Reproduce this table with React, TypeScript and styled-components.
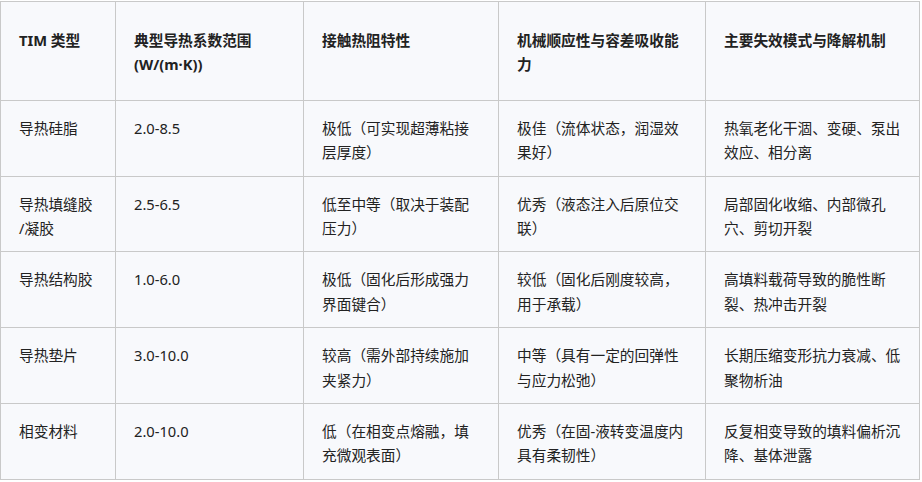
import React from "react";
import styled, { createGlobalStyle } from "styled-components";

const Global = createGlobalStyle`
  html, body { margin: 0; padding: 0; background: #ffffff; }
  body { font-family: "Noto Sans", "Noto Sans CJK SC", sans-serif; }
`;

const Table = styled.table`
  margin-top: 1px;
  width: 919px;
  table-layout: fixed;
  border-collapse: collapse;
  background: #f8f9fc;
  color: #222;
  font-family: "Noto Sans", "Noto Sans CJK SC", sans-serif;
  font-size: 14.7px;
  line-height: 24.4px;
`;

const Head = styled.th`
  text-align: left;
  vertical-align: top;
  font-weight: 700;
  padding: 26px 18px 23px;
  border: 1px solid #c9c9c9;
`;

const Cell = styled.td`
  vertical-align: top;
  padding: 15px 18px 11px;
  border: 1px solid #c9c9c9;
`;

const widths = [115, 188, 195, 207, 214];

const headers = [
  "TIM 类型",
  "典型导热系数范围 (W/(m·K))",
  "接触热阻特性",
  "机械顺应性与容差吸收能力",
  "主要失效模式与降解机制",
];

const rows: string[][] = [
  ["导热硅脂", "2.0-8.5", "极低（可实现超薄粘接层厚度）", "极佳（流体状态，润湿效果好）", "热氧老化干涸、变硬、泵出效应、相分离"],
  ["导热填缝胶\u200B/凝胶", "2.5-6.5", "低至中等（取决于装配压力）", "优秀（液态注入后原位交联）", "局部固化收缩、内部微孔穴、剪切开裂"],
  ["导热结构胶", "1.0-6.0", "极低（固化后形成强力界面键合）", "较低（固化后刚度较高，用于承载）", "高填料载荷导致的脆性断裂、热冲击开裂"],
  ["导热垫片", "3.0-10.0", "较高（需外部持续施加夹紧力）", "中等（具有一定的回弹性与应力松弛）", "长期压缩变形抗力衰减、低聚物析油"],
  ["相变材料", "2.0-10.0", "低（在相变点熔融，填充微观表面）", "优秀（在固-液转变温度内具有柔韧性）", "反复相变导致的填料偏析沉降、基体泄露"],
];

export default function App() {
  return (
    <>
      <Global />
      <Table>
        <colgroup>
          {widths.map((w, i) => (
            <col key={i} style={{ width: w }} />
          ))}
        </colgroup>
        <thead>
          <tr>
            {headers.map((h) => (
              <Head key={h}>{h}</Head>
            ))}
          </tr>
        </thead>
        <tbody>
          {rows.map((r) => (
            <tr key={r[0]}>
              {r.map((c, i) => (
                <Cell key={i}>{c}</Cell>
              ))}
            </tr>
          ))}
        </tbody>
      </Table>
    </>
  );
}
